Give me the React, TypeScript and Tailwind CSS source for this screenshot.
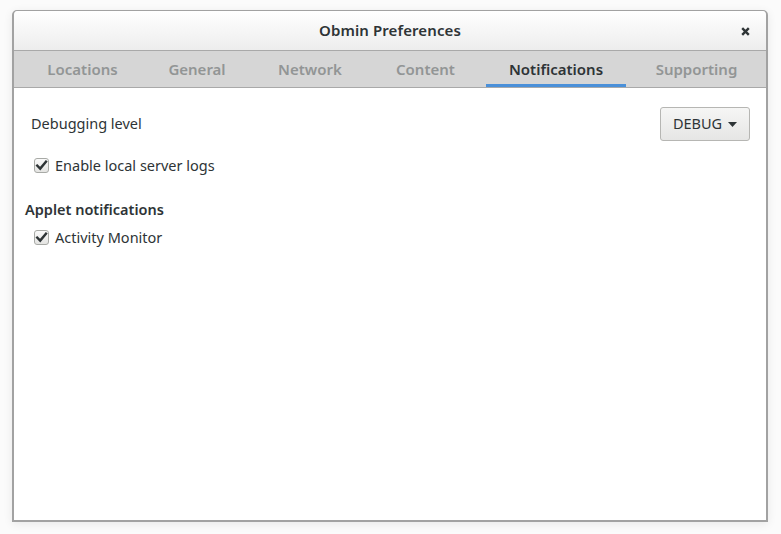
import React from "react";

const tabs = [
  { label: "Locations", w: "w-[113px]" },
  { label: "General", w: "w-[100px]" },
  { label: "Network", w: "w-[110px]" },
  { label: "Content", w: "w-[105px]" },
  { label: "Notifications", w: "w-[140px]", active: true },
  { label: "Supporting", w: "w-[125px]" },
];

function CheckBox() {
  return (
    <span className="flex h-[15px] w-[15px] items-center justify-center rounded-[3px] border border-[#a8aaa6] bg-gradient-to-b from-[#fafafa] to-[#e4e4e2]">
      <svg width="13" height="13" viewBox="0 0 13 13">
        <path d="M2.2 6.6 L5.2 9.6 L11 2.6" fill="none" stroke="#2e3436" strokeWidth="2.4" strokeLinecap="square" />
      </svg>
    </span>
  );
}

function CheckRow({ label }: { label: string }) {
  return (
    <div className="flex items-center gap-[6px] pl-[20px]">
      <CheckBox />
      <span>{label}</span>
    </div>
  );
}

export default function App() {
  return (
    <div
      className="h-[534px] w-[781px] bg-[#fbfbfb] pl-[12px] pt-[10px] text-[#2e3436]"
      style={{ fontFamily: '"Noto Sans", "DejaVu Sans", sans-serif' }}
    >
      <div className="flex h-[512px] w-[756px] flex-col rounded-t-[5px] border border-[#a2a2a2] border-b-2 border-l-2 border-r-2 bg-white shadow-[0_2px_10px_rgba(0,0,0,0.08)]">
        {/* Title bar */}
        <div className="relative flex h-[40px] shrink-0 items-center justify-center rounded-t-[5px] border-b border-[#a9a9a9] bg-gradient-to-b from-[#ffffff] to-[#ededed]">
          <span className="text-[15px] font-semibold tracking-[0.1px] text-[#2e3436]">Obmin Preferences</span>
          <svg className="absolute right-[16px] top-[16px]" width="9" height="9" viewBox="0 0 9 9">
            <path d="M1.2 1.2 L7.8 7.8 M7.8 1.2 L1.2 7.8" stroke="#2e3436" strokeWidth="2.4" />
          </svg>
        </div>

        {/* Tabs */}
        <div className="flex h-[37px] shrink-0 items-stretch gap-[8px] border-b border-[#a9a9a9] bg-[#d6d6d6] pl-[12px]">
          {tabs.map((t) => (
            <div
              key={t.label}
              className={
                "flex items-center justify-center border-b-[3px] pt-[3px] text-[15px] font-semibold " +
                t.w +
                (t.active ? " border-[#4a90d9] text-[#2e3436]" : " border-transparent text-[#929595]")
              }
            >
              {t.label}
            </div>
          ))}
        </div>

        {/* Content */}
        <div className="flex flex-1 flex-col text-[14.5px]">
          <div className="flex items-center justify-between pl-[17px] pr-[16px] pt-[19px]">
            <span>Debugging level</span>
            <button className="flex h-[34px] w-[90px] items-center justify-center gap-[6px] rounded-[3px] border border-[#b6b6b3] bg-gradient-to-b from-[#f6f6f5] to-[#e6e6e5] text-[14.5px] text-[#2e3436]">
              DEBUG
              <svg width="9" height="5" viewBox="0 0 9 5">
                <path d="M0 0 L9 0 L4.5 5 Z" fill="#2e3436" />
              </svg>
            </button>
          </div>
          <div className="mt-[14px]">
            <CheckRow label="Enable local server logs" />
          </div>
          <div className="mt-[22px] pl-[11px] font-semibold">Applet notifications</div>
          <div className="mt-[6px]">
            <CheckRow label="Activity Monitor" />
          </div>
        </div>
      </div>
    </div>
  );
}
